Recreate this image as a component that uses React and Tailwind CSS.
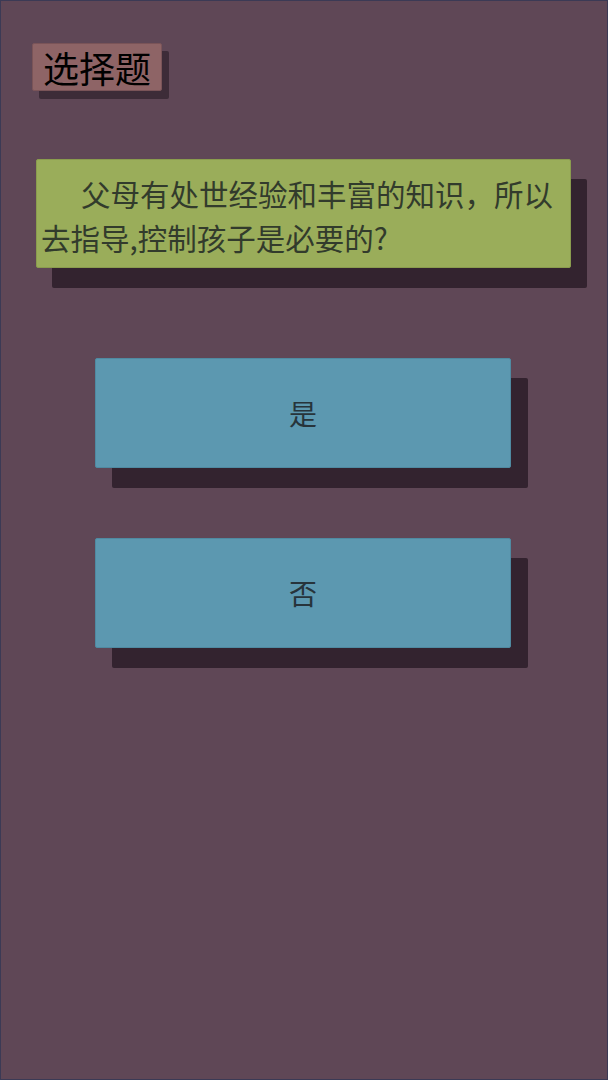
import React from 'react';

const cjk = { fontFamily: '"Noto Sans CJK SC", "Noto Sans", sans-serif' };

const AnswerButton = ({ label }) => (
    <button
        type="button"
        className="ml-[94px] flex h-[110px] w-[416px] items-center justify-center rounded-[2px] border border-[#4f8aa1] bg-[#5c98b0] text-[28px] text-[#27343b] shadow-[17px_20px_0_#33232f]"
        style={cjk}
    >
        {label}
    </button>
);

export default function App() {
    return (
        <div className="h-[1080px] w-[608px] overflow-hidden border border-[#3b3a55] bg-[#5f4756]" style={cjk}>

            {/* TITLE */}
            <div className="ml-[31px] mt-[42px] inline-flex h-[48px] w-[130px] items-center justify-center rounded-[2px] border border-[#7a5458] bg-[#8e6466] text-[36px] leading-none text-black shadow-[7px_8px_0_#3d2c38]">
                选择题
            </div>

            {/* QUESTION */}
            <div className="ml-[35px] mt-[68px] w-[535px] rounded-[2px] border border-[#8a9c4e] bg-[#9aad5a] pb-[8px] pl-[4px] pr-[4px] pt-[11px] text-[29.5px] leading-[44px] text-[#323b2c] shadow-[16px_20px_0_#33232f]">
                <p className="indent-[40px] whitespace-nowrap">父母有处世经验和丰富的知识，所以</p>
                <p className="whitespace-nowrap">去指导,控制孩子是必要的?</p>
            </div>

            {/* ANSWERS */}
            <div className="mt-[90px] flex flex-col gap-[70px]">
                <AnswerButton label="是" />
                <AnswerButton label="否" />
            </div>
        </div>
    );
}
